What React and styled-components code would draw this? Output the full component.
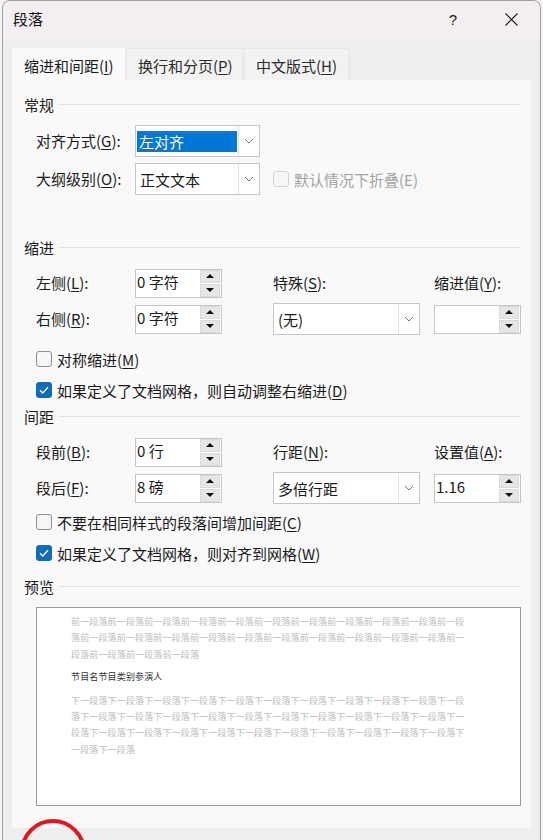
import React from 'react';
import styled, { createGlobalStyle } from 'styled-components';

const FONT = `"Noto Sans CJK SC", "Noto Sans", "Liberation Sans", sans-serif`;

const GlobalStyle = createGlobalStyle`
  html, body { margin: 0; padding: 0; background: #f4f4f4; }
  body { font-family: ${FONT}; color: #1b1b1b; width: 543px; height: 840px; overflow: hidden; }
  * { box-sizing: border-box; }
`;

const Page = styled.div`
  width: 543px;
  height: 840px;
  padding-left: 2px;
  position: relative;
  overflow: hidden;
`;

const Dialog = styled.div`
  width: 539px;
  height: 840px;
  border: 1px solid #a2a2a2;
  border-bottom: none;
  border-radius: 8px 8px 0 0;
  background: #eeeeee;
  overflow: hidden;
  display: flex;
  flex-direction: column;
`;

const TitleBar = styled.div`
  height: 39px;
  flex: none;
  background: #f3eef1;
  display: flex;
  align-items: center;
  padding: 0 6px 3px 10px;
`;

const Title = styled.div`
  font-size: 15px;
  line-height: 20px;
  color: #111;
`;

const TitleButton = styled.div`
  width: 46px;
  height: 30px;
  display: flex;
  align-items: center;
  justify-content: center;
  font-size: 15px;
  color: #222;
  margin-left: ${p => (p.$first ? 'auto' : '0')};
  margin-right: ${p => (p.$first ? '12px' : '0')};
  font-family: "Liberation Sans", sans-serif;
`;

const Body = styled.div`
  flex: 1;
  padding: 8px 9px 0 9px;
  background: linear-gradient(#efedef, #eeeeee 40px);
`;

const TabRow = styled.div`
  display: flex;
  gap: 1px;
  height: 32px;
`;

const Tab = styled.div`
  width: ${p => p.$w}px;
  height: 32px;
  padding: 2px 0 0 11px;
  display: flex;
  align-items: center;
  font-size: 15px;
  color: ${p => (p.$active ? '#1a1a1a' : '#2a2a2a')};
  background: ${p => (p.$active ? '#f9f9f9' : '#f2f2f2')};
  border: 1px solid ${p => (p.$active ? '#f9f9f9' : '#e6e6e6')};
  border-bottom: none;
`;

const Panel = styled.div`
  width: 519px;
  height: 748px;
  background: #f9f9f9;
  padding: 15px 10px 0 12px;
  display: flex;
  flex-direction: column;
`;

const SectionHead = styled.div`
  height: 20px;
  display: flex;
  align-items: center;
  gap: 5px;
  font-size: 15px;
  line-height: 20px;
  color: #1b1b1b;
  margin-top: ${p => p.$mt || 0}px;
  &::after {
    content: '';
    flex: 1;
    height: 1px;
    margin-top: -2px;
    background: #e2e2e2;
  }
`;

const U = styled.span`
  text-decoration: underline;
  text-underline-offset: 2px;
  text-decoration-thickness: 1px;
`;

const GeneralGrid = styled.div`
  margin-top: 10px;
  padding-left: 12px;
  display: grid;
  grid-template-columns: 99px 125px 13px auto;
  grid-template-rows: 32px 32px;
  row-gap: 6px;
  align-items: center;
`;

const MetricGrid = styled.div`
  margin-top: 10px;
  padding-left: 12px;
  display: grid;
  grid-template-columns: 99px 87px 51px 147px 14px 87px;
  grid-template-rows: 30px 32px;
  row-gap: 5px;
  align-items: center;
`;

const Label = styled.div`
  font-size: 15px;
  line-height: 20px;
  color: #1b1b1b;
  white-space: nowrap;
`;

const Select = styled.div`
  width: ${p => p.$w}px;
  height: 32px;
  background: #fff;
  border: 1px solid #c6c6c6;
  display: flex;
  align-items: stretch;
`;

const SelectValue = styled.div`
  flex: 1;
  display: flex;
  align-items: center;
  padding-left: 4px;
  font-size: 15px;
  color: #1b1b1b;
`;

const Highlight = styled.div`
  flex: 1;
  margin: 5px 1px 4px 1px;
  background: #0078d7;
  color: #fff;
  font-size: 15px;
  line-height: 22px;
  padding-left: 2px;
`;

const Arrow = styled.div`
  width: 21px;
  border-left: 1px solid #e1e1e1;
  display: flex;
  align-items: center;
  justify-content: center;
`;

const Spin = styled.div`
  width: 87px;
  height: 29px;
  background: #fff;
  border: 1px solid #c6c6c6;
  display: flex;
`;

const SpinText = styled.div`
  flex: 1;
  padding: 0 0 0 1px;
  font-size: 15px;
  line-height: 24px;
  color: #1b1b1b;
  white-space: nowrap;
`;

const SpinButtons = styled.div`
  width: 20px;
  margin-right: 1px;
  display: flex;
  flex-direction: column;
  gap: 1px;
`;

const SpinButton = styled.div`
  height: 13px;
  background: #e6e6e6;
  border: 1px solid #dadada;
  display: flex;
  align-items: center;
  justify-content: center;
  &::before {
    content: '';
    width: 0;
    height: 0;
    border-left: 4px solid transparent;
    border-right: 4px solid transparent;
    ${p => (p.$up ? 'border-bottom: 4px solid #111;' : 'border-top: 4px solid #111;')}
  }
`;

const CheckRow = styled.div`
  height: 20px;
  margin-top: ${p => p.$mt || 0}px;
  padding-left: ${p => p.$pl ?? 12}px;
  display: flex;
  align-items: center;
  gap: 5px;
  font-size: 15px;
  color: ${p => (p.$disabled ? '#a3a3a3' : '#1b1b1b')};
  white-space: nowrap;
`;

const Box = styled.div`
  width: 16px;
  height: 16px;
  border-radius: 3px;
  flex: none;
  display: flex;
  align-items: center;
  justify-content: center;
  background: ${p => (p.$checked ? '#0f6cbd' : '#f6f6f6')};
  border: 1px solid ${p => (p.$checked ? '#0f6cbd' : p.$disabled ? '#d2d2d2' : '#8e8e8e')};
`;

const PreviewBox = styled.div`
  margin: 10px 0 0 12px;
  width: 485px;
  height: 199px;
  background: #fff;
  border: 1px solid #9a9a9a;
  padding: 6px 0 0 34px;
`;

const PreviewPara = styled.p`
  margin: 0 0 ${p => p.$mb || 0}px 0;
  width: 398px;
  font-size: 9px;
  letter-spacing: 0.15px;
  line-height: 16.4px;
  color: ${p => (p.$main ? '#333' : '#bcbcbc')};
  word-break: break-all;
`;

const Annotation = styled.div`
  position: absolute;
  left: 20px;
  top: 819px;
  width: 66px;
  height: 66px;
  border: 4px solid #e3161d;
  border-radius: 50%;
  pointer-events: none;
`;

const Chevron = () => (
  <svg width="10" height="6" viewBox="0 0 10 6">
    <path d="M1 1 L5 5 L9 1" fill="none" stroke="#7a7a7a" strokeWidth="1" />
  </svg>
);

const Check = () => (
  <svg width="10" height="8" viewBox="0 0 10 8">
    <path d="M1 4.2 L3.8 7 L9 1.2" fill="none" stroke="#fff" strokeWidth="1.3" />
  </svg>
);

const CloseIcon = () => (
  <svg width="13" height="13" viewBox="0 0 13 13">
    <path d="M0.5 0.5 L12.5 12.5 M12.5 0.5 L0.5 12.5" stroke="#1a1a1a" strokeWidth="1.1" />
  </svg>
);

const SpinField = ({ value }) => (
  <Spin>
    <SpinText>{value}</SpinText>
    <SpinButtons>
      <SpinButton $up />
      <SpinButton />
    </SpinButtons>
  </Spin>
);

const Dropdown = ({ w, value, highlight }) => (
  <Select $w={w}>
    {highlight ? <Highlight>{value}</Highlight> : <SelectValue>{value}</SelectValue>}
    <Arrow>
      <Chevron />
    </Arrow>
  </Select>
);

const CheckItem = ({ checked, disabled, children, mt, pl }) => (
  <CheckRow $mt={mt} $pl={pl} $disabled={disabled}>
    <Box $checked={checked} $disabled={disabled}>{checked && <Check />}</Box>
    <span>{children}</span>
  </CheckRow>
);

const Empty = () => <div />;

export default function App() {
  const before = '前一段落'.repeat(25);
  const after = '下一段落'.repeat(34);
  return (
    <Page>
      <GlobalStyle />
      <Dialog>
        <TitleBar>
          <Title>段落</Title>
          <TitleButton $first>?</TitleButton>
          <TitleButton>
            <CloseIcon />
          </TitleButton>
        </TitleBar>
        <Body>
          <TabRow>
            <Tab $active $w={113}>缩进和间距(<U>I</U>)</Tab>
            <Tab $w={117}>换行和分页(<U>P</U>)</Tab>
            <Tab $w={105}>中文版式(<U>H</U>)</Tab>
          </TabRow>
          <Panel>
            <SectionHead>常规</SectionHead>
            <GeneralGrid>
              <Label>对齐方式(<U>G</U>):</Label>
              <Dropdown w={125} value="左对齐" highlight />
              <Empty />
              <Empty />
              <Label>大纲级别(<U>O</U>):</Label>
              <Dropdown w={125} value="正文文本" />
              <Empty />
              <CheckItem disabled pl={0}>默认情况下折叠(E)</CheckItem>
            </GeneralGrid>

            <SectionHead $mt={43}>缩进</SectionHead>
            <MetricGrid>
              <Label>左侧(<U>L</U>):</Label>
              <SpinField value="0 字符" />
              <Empty />
              <Label>特殊(<U>S</U>):</Label>
              <Empty />
              <Label>缩进值(<U>Y</U>):</Label>
              <Label>右侧(<U>R</U>):</Label>
              <SpinField value="0 字符" />
              <Empty />
              <Dropdown w={147} value="(无)" />
              <Empty />
              <SpinField value="" />
            </MetricGrid>
            <CheckItem mt={14}>对称缩进(<U>M</U>)</CheckItem>
            <CheckItem checked mt={11}>如果定义了文档网格，则自动调整右缩进(<U>D</U>)</CheckItem>

            <SectionHead $mt={7}>间距</SectionHead>
            <MetricGrid>
              <Label>段前(<U>B</U>):</Label>
              <SpinField value="0 行" />
              <Empty />
              <Label>行距(<U>N</U>):</Label>
              <Empty />
              <Label>设置值(<U>A</U>):</Label>
              <Label>段后(<U>F</U>):</Label>
              <SpinField value="8 磅" />
              <Empty />
              <Dropdown w={147} value="多倍行距" />
              <Empty />
              <SpinField value="1.16" />
            </MetricGrid>
            <CheckItem mt={8}>不要在相同样式的段落间增加间距(<U>C</U>)</CheckItem>
            <CheckItem checked mt={11}>如果定义了文档网格，则对齐到网格(<U>W</U>)</CheckItem>

            <SectionHead $mt={14}>预览</SectionHead>
            <PreviewBox>
              <PreviewPara $mb={6}>{before}</PreviewPara>
              <PreviewPara $main $mb={7}>节目名节目类别参演人</PreviewPara>
              <PreviewPara>{after}</PreviewPara>
            </PreviewBox>
          </Panel>
        </Body>
      </Dialog>
      <Annotation />
    </Page>
  );
}
